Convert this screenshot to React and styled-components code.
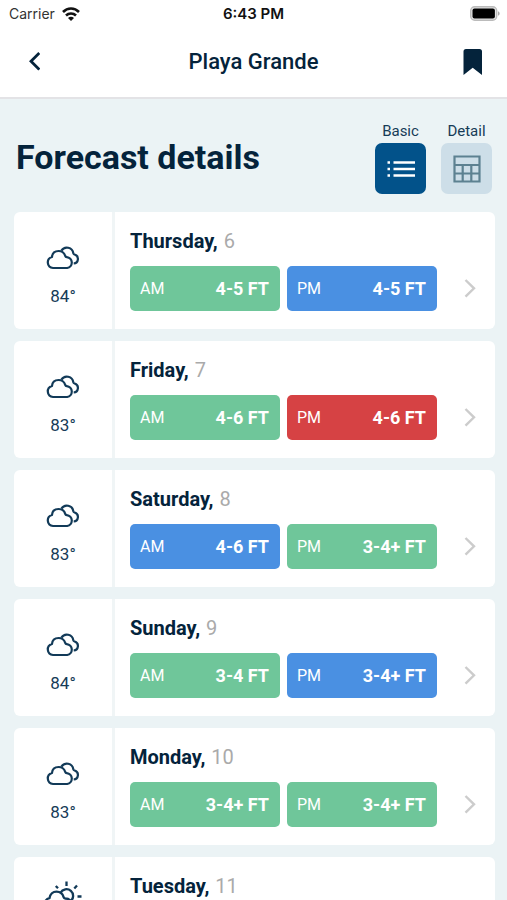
import { useState } from 'react';
import styled, { createGlobalStyle } from 'styled-components';

const GlobalStyle = createGlobalStyle`
  * {
    box-sizing: border-box;
  }

  body {
    margin: 0;
    background: #ebf3f5;
    color: #04233b;
    font-family: Roboto, 'Liberation Sans', sans-serif;
  }
`;

const Screen = styled.div`
  display: flex;
  flex-direction: column;
  height: 100vh;
`;

const Header = styled.header`
  flex: none;
  background: #fff;
  border-bottom: 2px solid #e3e3e6;
`;

const StatusBar = styled.div`
  display: grid;
  grid-template-columns: 1fr auto 1fr;
  align-items: center;
  height: 27px;
  padding: 0 7px;
  color: #111;
  font-family: Inter, Roboto, sans-serif;
  font-size: 14px;
`;

const Carrier = styled.span`
  display: flex;
  align-items: center;
  gap: 7px;
  padding-left: 2px;
  color: #333;
`;

const Clock = styled.time`
  font-size: 15px;
  font-weight: 600;
`;

const Battery = styled.svg`
  justify-self: end;
`;

const NavBar = styled.nav`
  display: grid;
  grid-template-columns: 1fr auto 1fr;
  align-items: center;
  height: 70px;
  padding: 0 16px;
`;

const PlaceName = styled.h2`
  margin: 0;
  font-size: 22px;
  font-weight: 500;
  line-height: 28px;
`;

const IconButton = styled.button`
  display: flex;
  align-items: center;
  justify-content: center;
  justify-self: ${(props) => props.$side};
  width: 36px;
  height: 40px;
  padding: 0;
  border: 0;
  background: none;
  color: #04233b;
  cursor: pointer;
`;

const Content = styled.main`
  flex: 1;
  min-height: 0;
  padding: 24px 12px 0 14px;
  overflow-y: auto;
  scrollbar-width: none;
`;

const TitleRow = styled.div`
  display: flex;
  align-items: center;
  justify-content: space-between;
  padding: 0 3px 0 2px;
`;

const Title = styled.h1`
  margin: 0;
  padding-bottom: 4px;
  font-size: 34px;
  font-weight: 700;
  line-height: 40px;
`;

const Modes = styled.div`
  display: flex;
  gap: 15px;
`;

const Mode = styled.div`
  display: flex;
  flex-direction: column;
  align-items: center;
  gap: 3px;
  width: 51px;
`;

const ModeLabel = styled.label`
  color: #163b57;
  font-size: 15px;
  line-height: 17px;
`;

const ModeButton = styled.button`
  display: flex;
  align-items: center;
  justify-content: center;
  width: 51px;
  height: 51px;
  padding: 0;
  border: 0;
  border-radius: 7px;
  background: ${(props) => (props.$active ? '#02528a' : '#cddee8')};
  color: ${(props) => (props.$active ? '#fff' : '#5d8191')};
  cursor: pointer;
`;

const DayList = styled.ul`
  display: flex;
  flex-direction: column;
  gap: 12px;
  margin: 18px 0 12px;
  padding: 0;
  list-style: none;
`;

const DayCard = styled.a`
  display: flex;
  height: 117px;
  border-radius: 6px;
  background: #fff;
  color: inherit;
  text-decoration: none;
`;

const Weather = styled.div`
  display: flex;
  flex: none;
  flex-direction: column;
  align-items: center;
  gap: 16px;
  width: 101px;
  padding-top: 24px;
  border-right: 3px solid #f0f5f6;
`;

const WeatherIcon = styled.div`
  display: flex;
  align-items: flex-end;
  height: 34px;
`;

const Temperature = styled.span`
  color: #163b57;
  font-size: 17px;
  line-height: 20px;
`;

const Details = styled.div`
  flex: 1;
  padding: 17px 18px 0 15px;
`;

const DayName = styled.h3`
  margin: 0 0 13px;
  font-size: 20px;
  font-weight: 700;
  line-height: 24px;
`;

const DayNumber = styled.span`
  margin-left: 1px;
  color: #aaa;
  font-weight: 400;
`;

const Periods = styled.div`
  display: flex;
  align-items: center;
  gap: 7px;
`;

const ratingColors = {
  green: '#6fc69a',
  blue: '#4a90e2',
  red: '#d64244',
};

const Period = styled.div`
  display: flex;
  flex: 1;
  align-items: center;
  justify-content: space-between;
  height: 45px;
  padding: 0 11px 0 10px;
  border-radius: 5px;
  background: ${(props) => ratingColors[props.$rating]};
  color: #fff;
`;

const PeriodName = styled.span`
  font-size: 16px;
`;

const WaveHeight = styled.strong`
  font-size: 18px;
  font-weight: 700;
`;

const Arrow = styled.svg`
  flex: none;
  margin-left: 20px;
`;

const WifiIcon = () => (
  <svg width="18" height="14" viewBox="0 0 18 14" fill="none" stroke="#111" strokeWidth="2.6" aria-hidden="true">
    <path d="M1 5C5.5 .4 12.5 .4 17 5" />
    <path d="M4 8.5c2.8-2.7 7.2-2.7 10 0" />
    <path d="M9 14 6 11c1.7-1.6 4.3-1.6 6 0Z" fill="#111" stroke="none" />
  </svg>
);

const BatteryIcon = () => (
  <Battery width="30" height="15" viewBox="0 0 30 15" role="img" aria-label="Battery full">
    <rect x=".7" y=".7" width="26" height="13.6" rx="4" fill="#e4e4e4" stroke="#bbb" strokeWidth="1.4" />
    <rect x="2.5" y="2.5" width="22.4" height="10" rx="2" fill="#000" />
    <path d="M28 5.2c2.2 1 2.2 3.6 0 4.6Z" fill="#aaa" />
  </Battery>
);

const BackIcon = () => (
  <svg width="12" height="20" viewBox="0 0 12 20" fill="none" stroke="currentColor" strokeWidth="2.8" aria-hidden="true">
    <path d="M11.3 1 3 9.3l8.3 8.3" />
  </svg>
);

const BookmarkIcon = () => (
  <svg width="20" height="27" viewBox="0 0 20 27" fill="currentColor" aria-hidden="true">
    <path d="M3 0h13.5a2.5 2.5 0 0 1 2.500 2.500v23.500l-9.300-7.200L.5 26V2.500A2.500 2.500 0 0 1 3 0Z" />
  </svg>
);

const ListIcon = () => (
  <svg width="28" height="18" viewBox="0 0 28 18" fill="none" stroke="currentColor" strokeWidth="2.4" aria-hidden="true">
    <path d="M.5 2.5H3M.5 9H3M.5 15.5H3" />
    <path d="M6.5 2.5H28M6.5 9H28M6.5 15.5H28" />
  </svg>
);

const TableIcon = () => (
  <svg width="28" height="28" viewBox="0 0 28 28" fill="none" stroke="currentColor" strokeWidth="2.2" aria-hidden="true">
    <path d="M1.500 1.500h25v25h-25ZM1.500 10h25M1.500 18.500h25M9.700 10v16.500M18.300 10v16.500" />
  </svg>
);

const CloudsIcon = () => (
  <svg width="34" height="24" viewBox="0 0 34 24" fill="none" stroke="#123a58" strokeWidth="2.2" strokeLinejoin="round" aria-hidden="true">
    <path d="M7 22A5.600 5.600 0 0 1 6 11C6.300 7.200 9 5 12.600 5c3.300 0 5.700 1.900 6.600 4.800.3 1 .7 1.200 1.600 1.300A5.500 5.500 0 0 1 21.200 22Z" />
    <path d="M15.400 4.600a6.500 6.500 0 0 1 11.900 2.600c.2.800.5 1.100 1.300 1.300a4.600 4.600 0 0 1-.9 9" />
  </svg>
);

const PartlySunnyIcon = () => (
  <svg width="38" height="34" viewBox="0 0 38 34" fill="none" stroke="#123a58" strokeWidth="2.3" strokeLinejoin="round" aria-hidden="true">
    <path d="M7 31A7 7 0 0 1 5.500 17.200C6 13 9 10.600 12.500 10.600c3.500 0 6.200 2.300 7.100 5.500.3 1 .8 1.300 1.800 1.400A6.500 6.500 0 0 1 21.500 31Z" />
    <path d="M16.500 11.700a6.700 6.700 0 1 1 9.700 8.700" />
    <path d="M22.500 .5v4.400M11.800 5l2.200 2.300M33 4.500l-2.700 3M33.500 15.500H37.500M29.800 23.500l3 3" />
  </svg>
);

const ChevronIcon = () => (
  <Arrow width="13" height="20" viewBox="0 0 13 20" fill="none" stroke="#ccc" strokeWidth="2.4" aria-hidden="true">
    <path d="M1.500 1 10 9.300 1.500 17.600" />
  </Arrow>
);

const modes = [
  { id: 'basic', label: 'Basic', Icon: ListIcon },
  { id: 'detail', label: 'Detail', Icon: TableIcon },
];

const days = [
  { name: 'Thursday', date: 6, temp: 84, am: ['4-5 FT', 'green'], pm: ['4-5 FT', 'blue'] },
  { name: 'Friday', date: 7, temp: 83, am: ['4-6 FT', 'green'], pm: ['4-6 FT', 'red'] },
  { name: 'Saturday', date: 8, temp: 83, am: ['4-6 FT', 'blue'], pm: ['3-4+ FT', 'green'] },
  { name: 'Sunday', date: 9, temp: 84, am: ['3-4 FT', 'green'], pm: ['3-4+ FT', 'blue'] },
  { name: 'Monday', date: 10, temp: 83, am: ['3-4+ FT', 'green'], pm: ['3-4+ FT', 'green'] },
  { name: 'Tuesday', date: 11, sunny: true },
];

const Day = ({ day }) => (
  <li>
    <DayCard href={`#day-${day.date}`}>
      <Weather>
        <WeatherIcon>{day.sunny ? <PartlySunnyIcon /> : <CloudsIcon />}</WeatherIcon>
        {day.temp && <Temperature>{day.temp}°</Temperature>}
      </Weather>
      <Details>
        <DayName>
          {day.name}, <DayNumber>{day.date}</DayNumber>
        </DayName>
        {day.am && (
          <Periods>
            <Period $rating={day.am[1]}>
              <PeriodName>AM</PeriodName>
              <WaveHeight>{day.am[0]}</WaveHeight>
            </Period>
            <Period $rating={day.pm[1]}>
              <PeriodName>PM</PeriodName>
              <WaveHeight>{day.pm[0]}</WaveHeight>
            </Period>
            <ChevronIcon />
          </Periods>
        )}
      </Details>
    </DayCard>
  </li>
);

const App = () => {
  const [mode, setMode] = useState('basic');

  return (
    <Screen>
      <GlobalStyle />
      <Header>
        <StatusBar>
          <Carrier>
            Carrier
            <WifiIcon />
          </Carrier>
          <Clock>6:43 PM</Clock>
          <BatteryIcon />
        </StatusBar>
        <NavBar>
          <IconButton $side="start" aria-label="Back">
            <BackIcon />
          </IconButton>
          <PlaceName>Playa Grande</PlaceName>
          <IconButton $side="end" aria-label="Bookmark">
            <BookmarkIcon />
          </IconButton>
        </NavBar>
      </Header>
      <Content>
        <TitleRow>
          <Title>Forecast details</Title>
          <Modes>
            {modes.map(({ id, label, Icon }) => (
              <Mode key={id}>
                <ModeLabel htmlFor={id}>{label}</ModeLabel>
                <ModeButton
                  id={id}
                  $active={mode === id}
                  aria-pressed={mode === id}
                  onClick={() => setMode(id)}
                >
                  <Icon />
                </ModeButton>
              </Mode>
            ))}
          </Modes>
        </TitleRow>
        <DayList>
          {days.map((day) => (
            <Day key={day.date} day={day} />
          ))}
        </DayList>
      </Content>
    </Screen>
  );
};

export default App;
